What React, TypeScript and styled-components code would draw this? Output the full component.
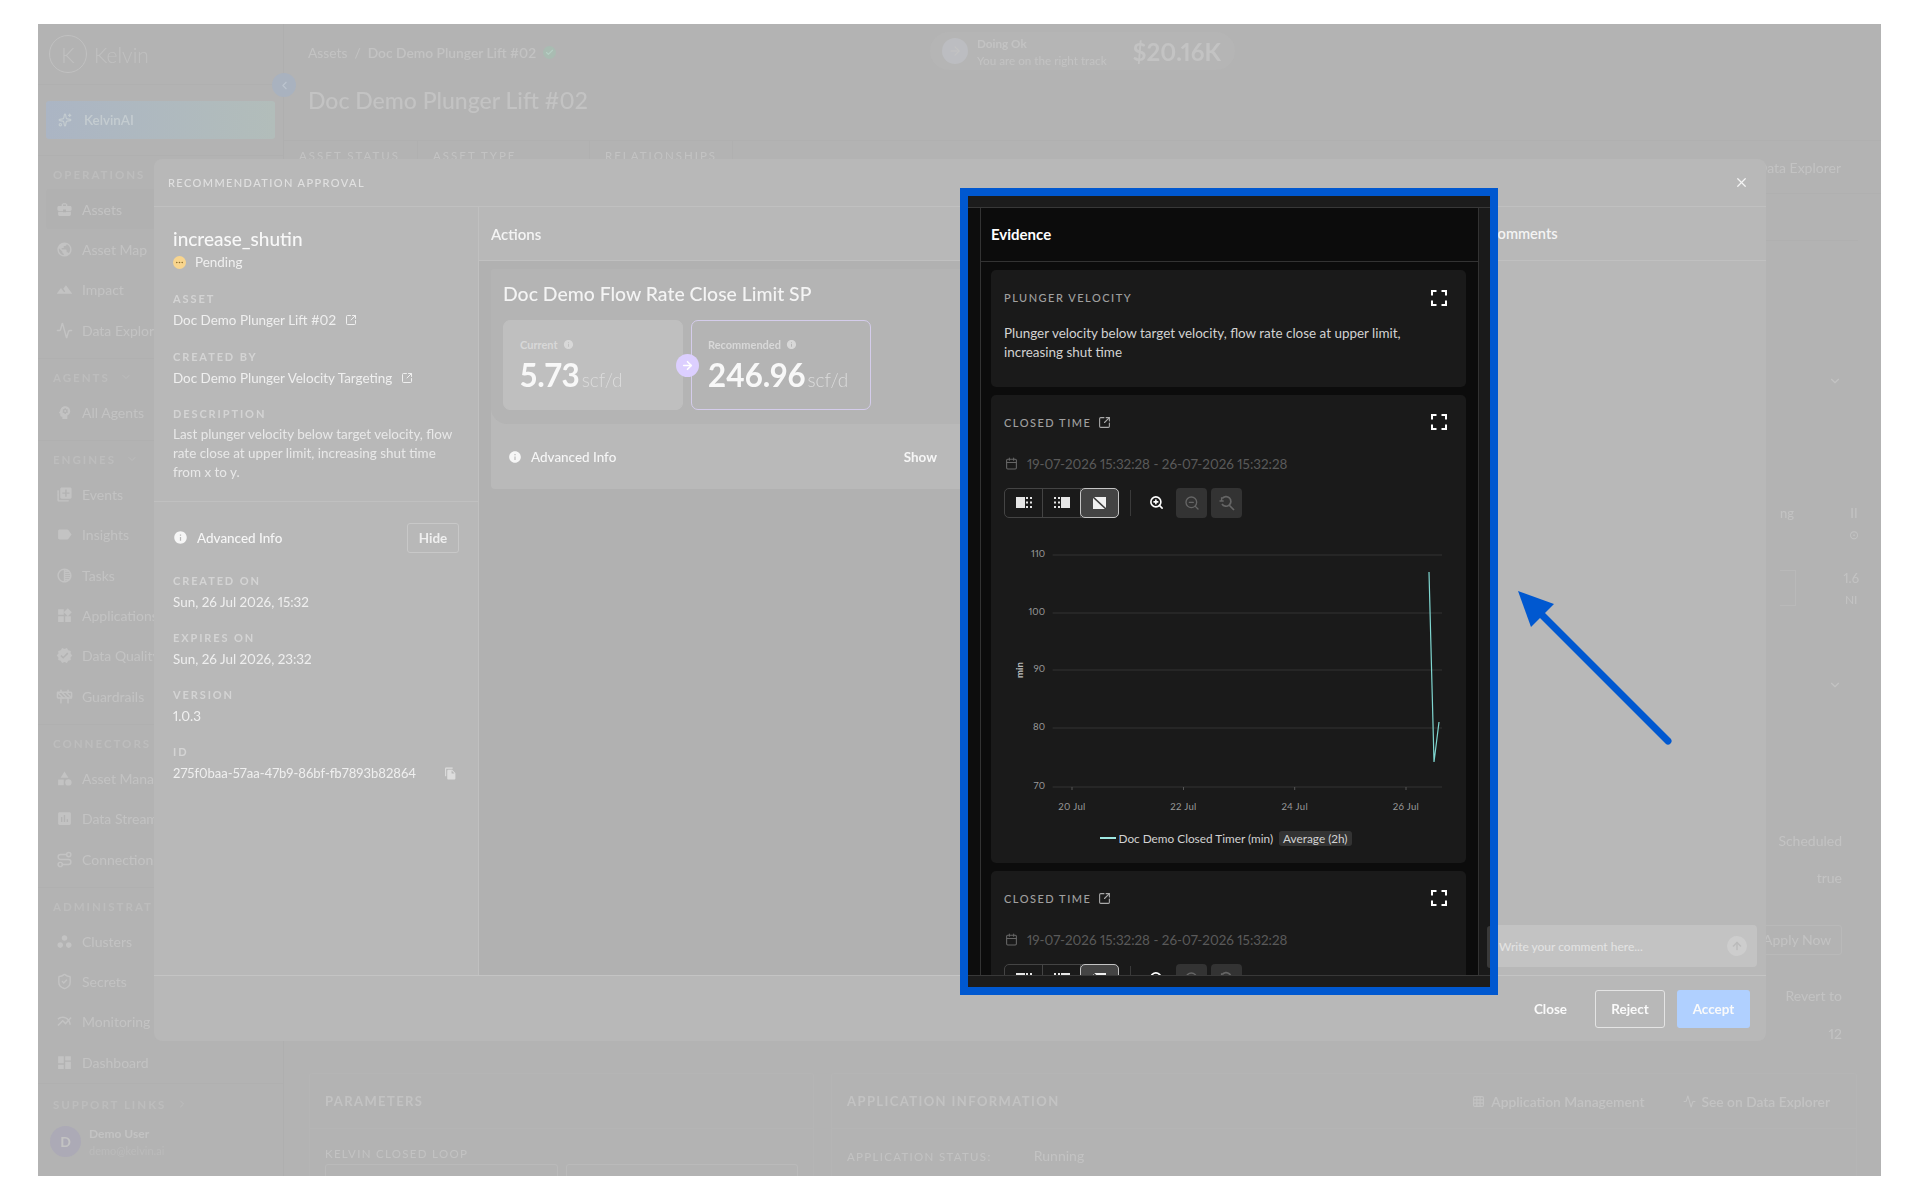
import React from 'react'
import styled, { createGlobalStyle } from 'styled-components'
import { Activity, Construction, Route, ShieldCheck, SquareArrowOutUpRight, X, ZoomIn, ZoomOut, ArrowRight, ArrowUp, ChevronDown, ChevronLeft, ChevronRight, Grid3x3, Sparkles, Check, Calendar } from 'lucide-react'
import { MdAssessment, MdCategory, MdDashboard, MdFileCopy, MdInfo, MdLabel, MdLandscape, MdLibraryAdd, MdMultilineChart, MdPsychology, MdPublic, MdVerified, MdWidgets, MdWorkspaces, MdBusinessCenter, MdTonality } from 'react-icons/md'

const GlobalStyle = createGlobalStyle`
  html, body { margin: 0; background: #fff; }
  * { box-sizing: border-box; }
  body {
    font-family: Lato, "Open Sans", sans-serif;
    font-size: 13.44px;
    font-variant-numeric: proportional-nums;
  }
`

const sections = [
  { title: 'OPERATIONS', chevron: true, items: [
    { label: 'Assets', icon: <MdBusinessCenter />, active: true },
    { label: 'Asset Map', icon: <MdPublic /> },
    { label: 'Impact', icon: <MdLandscape /> },
    { label: 'Data Explorer', icon: <Activity /> },
  ]},
  { title: 'AGENTS', chevron: true, items: [{ label: 'All Agents', icon: <MdPsychology /> }] },
  { title: 'ENGINES', chevron: true, items: [
    { label: 'Events', icon: <MdLibraryAdd /> },
    { label: 'Insights', icon: <MdLabel /> },
    { label: 'Tasks', icon: <MdTonality /> },
    { label: 'Applications', icon: <MdWidgets /> },
    { label: 'Data Quality', icon: <MdVerified /> },
    { label: 'Guardrails', icon: <Construction /> },
  ]},
  { title: 'CONNECTORS', items: [
    { label: 'Asset Management', icon: <MdCategory /> },
    { label: 'Data Streams', icon: <MdAssessment /> },
    { label: 'Connections', icon: <Route /> },
  ]},
  { title: 'ADMINISTRATION', items: [
    { label: 'Clusters', icon: <MdWorkspaces /> },
    { label: 'Secrets', icon: <ShieldCheck /> },
    { label: 'Monitoring', icon: <MdMultilineChart /> },
    { label: 'Dashboard', icon: <MdDashboard /> },
  ]},
]

const FullscreenIcon = () => (
  <svg width="16" height="16" viewBox="0 0 16 16" fill="none" stroke="#fff" strokeWidth="2">
    <path d="M1 5.5V1h4.5M10.5 1H15v4.5M15 10.5V15h-4.5M5.5 15H1v-4.5" />
  </svg>
)

const Dots = ({ x }: { x: number }) => (
  <g fill="#e6e6e6">
    {[0, 4.5, 9].map(y => <React.Fragment key={y}><rect x={x} y={y} width="2" height="2" /><rect x={x + 4} y={y} width="2" height="2" /></React.Fragment>)}
  </g>
)

const SelectAfter = () => (
  <svg width="16" height="11" viewBox="0 0 16 11"><rect x="0" y="0" width="9" height="11" fill="#e6e6e6" /><Dots x={10} /></svg>
)
const SelectBefore = () => (
  <svg width="16" height="11" viewBox="0 0 16 11"><Dots x={0} /><rect x="7" y="0" width="9" height="11" fill="#e6e6e6" /></svg>
)
const SelectNone = () => (
  <svg width="13" height="12" viewBox="0 0 13 12">
    <rect width="13" height="12" fill="#f0f0f0" />
    <path d="M0 0L13 12" stroke="#3c3c3c" strokeWidth="1.6" />
  </svg>
)

const ResetZoom = () => (
  <svg width="17" height="16" viewBox="0 0 17 16" fill="none" stroke="#666" strokeWidth="1.7">
    <path d="M4.2 3.6A4.8 4.8 0 1 1 4 9" /><path d="M1.5 6h4.2M3.6 6V2.2" strokeWidth="1.4" /><path d="M11 10l5 5" />
  </svg>
)

const PendingIcon = () => (
  <svg width="13" height="13" viewBox="0 0 13 13">
    <circle cx="6.5" cy="6.5" r="6.5" fill="#f8d58e" />
    <circle cx="3.8" cy="6.5" r=".8" fill="#8a6c2f" /><circle cx="6.5" cy="6.5" r=".8" fill="#8a6c2f" /><circle cx="9.2" cy="6.5" r=".8" fill="#8a6c2f" />
  </svg>
)

const chartTicks = [{ v: '110', y: 15 }, { v: '100', y: 73 }, { v: '90', y: 130 }, { v: '80', y: 188 }, { v: '70', y: 247 }]
const chartDates = [{ v: '20 Jul', x: 68 }, { v: '22 Jul', x: 179.5 }, { v: '24 Jul', x: 290.7 }, { v: '26 Jul', x: 402 }]

const TimeChart = () => (
  <ChartBox>
    <svg width="438" height="280" viewBox="0 0 438 280" fontFamily="Lato, sans-serif">
      {chartTicks.map(t => (
        <g key={t.v}>
          <line x1="48.6" x2="438" y1={t.y} y2={t.y} stroke="#333" />
          <text x="41" y={t.y + 2} textAnchor="end" fontSize="9.6" fill="#999">{t.v}</text>
        </g>
      ))}
      {chartDates.map(t => (
        <g key={t.v}>
          <line x1={t.x} x2={t.x} y1="247" y2="250" stroke="#555" />
          <text x={t.x} y="270" textAnchor="middle" fontSize="9.6" letterSpacing=".3" fill="#999">{t.v}</text>
        </g>
      ))}
      <text transform="translate(19 130) rotate(-90)" textAnchor="middle" fontSize="9.6" fontWeight="700" fill="#bbb">min</text>
      <polyline points="425,32 430,222 435,182" fill="none" stroke="#7fd6d0" strokeWidth="1.2" />
    </svg>
  </ChartBox>
)

const ChartCard = () => (
  <Card>
    <CardHead>
      <CardTitle>CLOSED TIME <SquareArrowOutUpRight size={13} color="#aaa" /></CardTitle>
      <FullscreenIcon />
    </CardHead>
    <DateRange><Calendar size={13} color="#666" /> 19-07-2026 15:32:28 - 26-07-2026 15:32:28</DateRange>
    <Toolbar>
      <Segments>
        <Segment><SelectAfter /></Segment>
        <Segment><SelectBefore /></Segment>
        <Segment $active><SelectNone /></Segment>
      </Segments>
      <ToolDivider />
      <ZoomButton><ZoomIn size={15} color="#fff" strokeWidth={2.6} /></ZoomButton>
      <ZoomButton $disabled><ZoomOut size={16} color="#666" /></ZoomButton>
      <ZoomButton $disabled><ResetZoom /></ZoomButton>
    </Toolbar>
    <TimeChart />
    <Legend>
      <LegendLine />
      <span>Doc Demo Closed Timer (min)</span>
      <LegendBadge>Average (2h)</LegendBadge>
    </Legend>
  </Card>
)

export default function App() {
  return (
    <>
      <GlobalStyle />
      <Frame>
        <Page>
          <Sidebar>
            <LogoBar>
              <LogoMark>K</LogoMark>
              <LogoText>Kelvin</LogoText>
            </LogoBar>
            <AiBlock>
              <AiButton><Sparkles size={14} /> KelvinAI</AiButton>
            </AiBlock>
            {sections.map((s, n) => (
              <Section key={s.title} $last={n === sections.length - 1}>
                <SectionLabel>{s.title} {s.chevron && <ChevronDown size={12} />}</SectionLabel>
                {s.items.map(i => (
                  <NavItem key={i.label} $active={i.active}>
                    <NavIcon>{i.icon}</NavIcon>
                    <span>{i.label}</span>
                  </NavItem>
                ))}
              </Section>
            ))}
            <SideFooter>
              <SectionLabel>SUPPORT LINKS <ChevronRight size={12} /></SectionLabel>
              <UserRow>
                <Avatar>D</Avatar>
                <div>
                  <UserName>Demo User</UserName>
                  <UserMail>demo@kelvin.ai</UserMail>
                </div>
              </UserRow>
            </SideFooter>
          </Sidebar>
          <CollapseDot><ChevronLeft size={13} /></CollapseDot>

          <Main>
            <TopBar>
              <TitleBlock>
                <Breadcrumb>
                  <span>Assets</span> <span>/</span> <strong>Doc Demo Plunger Lift #02</strong>
                  <StatusDot><Check size={9} strokeWidth={3} /></StatusDot>
                </Breadcrumb>
                <PageTitle>Doc Demo Plunger Lift #02</PageTitle>
              </TitleBlock>
              <ScorePill>
                <ScoreCircle><ArrowRight size={14} /></ScoreCircle>
                <ScoreText>
                  <b>Doing Ok</b>
                  <span>You are on the right track</span>
                </ScoreText>
                <ScoreValue>$20.16K</ScoreValue>
              </ScorePill>
            </TopBar>
            <InfoRow>
              <InfoCell $w={134}>ASSET STATUS</InfoCell>
              <InfoCell $w={172}>ASSET TYPE</InfoCell>
              <InfoCell $w={143}>RELATIONSHIPS</InfoCell>
              <InfoLink>See on Data Explorer</InfoLink>
            </InfoRow>
            <Body>
              <RightPanel>
                <PanelRule />
                <PanelChevron><ChevronDown size={14} /></PanelChevron>
                <PanelStat $top={114}>ng<StatStack><span>II</span><small>⊙</small></StatStack></PanelStat>
                <PanelStat $top={28}><i /><StatStack><span>1.6</span><small>NI</small></StatStack></PanelStat>
                <PanelChevron $top={71}><ChevronDown size={14} /></PanelChevron>
                <PanelText $top={137}>Scheduled</PanelText>
                <PanelText $top={20}>true</PanelText>
                <ApplyNow>Apply Now</ApplyNow>
                <PanelText $top={32}>Revert to</PanelText>
                <PanelText $top={21}>12</PanelText>
              </RightPanel>
            </Body>
            <BottomRow>
              <BottomCard $w={505}>
                <BottomHead>PARAMETERS</BottomHead>
                <BottomBody>
                  <BottomLabel>KELVIN CLOSED LOOP</BottomLabel>
                  <InputRow><FakeInput /><FakeInput /></InputRow>
                </BottomBody>
              </BottomCard>
              <BottomCard $grow>
                <BottomHead>
                  APPLICATION INFORMATION
                  <BottomLinks>
                    <span><Grid3x3 size={13} /> Application Management</span>
                    <span><Activity size={13} /> See on Data Explorer</span>
                  </BottomLinks>
                </BottomHead>
                <BottomBody>
                  <BottomLabel>APPLICATION STATUS: <em>Running</em></BottomLabel>
                </BottomBody>
              </BottomCard>
            </BottomRow>
          </Main>

          <Modal>
            <ModalHead>
              <ModalTitle>RECOMMENDATION APPROVAL</ModalTitle>
              <X size={15} color="#f4f4f4" />
            </ModalHead>
            <ModalColumns>
              <InfoColumn>
                <InfoTop>
                  <RecName>increase_shutin</RecName>
                  <RecStatus><PendingIcon /> Pending</RecStatus>
                  <Field><FieldLabel>ASSET</FieldLabel><FieldValue>Doc Demo Plunger Lift #02 <SquareArrowOutUpRight size={12} /></FieldValue></Field>
                  <Field><FieldLabel>CREATED BY</FieldLabel><FieldValue>Doc Demo Plunger Velocity Targeting <SquareArrowOutUpRight size={12} /></FieldValue></Field>
                  <Field>
                    <FieldLabel>DESCRIPTION</FieldLabel>
                    <Description>Last plunger velocity below target velocity, flow rate close at upper limit, increasing shut time from x to y.</Description>
                  </Field>
                </InfoTop>
                <InfoBottom>
                  <AdvancedRow>
                    <AdvancedLabel><MdInfo size={15} /> Advanced Info</AdvancedLabel>
                    <HideButton>Hide</HideButton>
                  </AdvancedRow>
                  <Field><FieldLabel>CREATED ON</FieldLabel><FieldValue>Sun, 26 Jul 2026, 15:32</FieldValue></Field>
                  <Field><FieldLabel>EXPIRES ON</FieldLabel><FieldValue>Sun, 26 Jul 2026, 23:32</FieldValue></Field>
                  <Field><FieldLabel>VERSION</FieldLabel><FieldValue>1.0.3</FieldValue></Field>
                  <Field>
                    <FieldLabel>ID</FieldLabel>
                    <IdRow>275f0baa-57aa-47b9-86bf-fb7893b82864 <MdFileCopy size={13} /></IdRow>
                  </Field>
                </InfoBottom>
              </InfoColumn>

              <ActionsColumn>
                <ColumnHead>Actions</ColumnHead>
                <ActionCard>
                  <ActionPanel>
                    <ActionTitle>Doc Demo Flow Rate Close Limit SP</ActionTitle>
                    <Tiles>
                      <Tile>
                        <TileLabel>Current <MdInfo size={11} /></TileLabel>
                        <TileValue>5.73<small>scf/d</small></TileValue>
                      </Tile>
                      <Tile $outlined>
                        <TileLabel>Recommended <MdInfo size={11} /></TileLabel>
                        <TileValue>246.96<small>scf/d</small></TileValue>
                      </Tile>
                      <TileArrow><ArrowRight size={13} strokeWidth={3} /></TileArrow>
                    </Tiles>
                  </ActionPanel>
                  <ActionFoot>
                    <AdvancedLabel><MdInfo size={14} /> Advanced Info</AdvancedLabel>
                    <ShowLink>Show</ShowLink>
                  </ActionFoot>
                </ActionCard>
              </ActionsColumn>

              <EvidenceSlot />

              <CommentsColumn>
                <CommentsHead>Comments</CommentsHead>
                <CommentBox>
                  <span>Write your comment here...</span>
                  <SendButton><ArrowUp size={12} strokeWidth={3} /></SendButton>
                </CommentBox>
              </CommentsColumn>
            </ModalColumns>
            <ModalFoot>
              <CloseLink>Close</CloseLink>
              <RejectButton>Reject</RejectButton>
              <AcceptButton>Accept</AcceptButton>
            </ModalFoot>
          </Modal>

          <Spotlight>
            <SpotStrip />
            <SpotColumns>
              <SpotGutter />
              <EvidenceColumn>
                <EvidenceHead>Evidence</EvidenceHead>
                <EvidenceBody>
                  <Card>
                    <CardHead>
                      <CardTitle>PLUNGER VELOCITY</CardTitle>
                      <FullscreenIcon />
                    </CardHead>
                    <CardText>Plunger velocity below target velocity, flow rate close at upper limit, increasing shut time</CardText>
                  </Card>
                  <ChartCard />
                  <ChartCard />
                </EvidenceBody>
              </EvidenceColumn>
              <SpotGutter $right>
                <CommentEdge />
              </SpotGutter>
            </SpotColumns>
            <SpotStrip $bottom />
          </Spotlight>
          <PointerArrow width="170" height="170" viewBox="0 0 170 170">
            <path d="M156 156L26 26" stroke="#0058d0" strokeWidth="7" strokeLinecap="round" fill="none" />
            <path d="M6 6L42 19 19 42z" fill="#0058d0" />
          </PointerArrow>
        </Page>
      </Frame>
    </>
  )
}

const Frame = styled.div`
  width: 1920px;
  height: 1200px;
  padding: 24px 39px 24px 38px;
`

const Page = styled.div`
  position: relative;
  display: flex;
  width: 1843px;
  height: 1152px;
  overflow: hidden;
  background: #b3b3b3;
`

const Sidebar = styled.aside`
  flex: none;
  width: 246px;
  display: flex;
  flex-direction: column;
  border-right: 1px solid #afafaf;
  color: #c3c3c3;
  filter: blur(.6px);
`

const CollapseDot = styled.div`
  position: absolute;
  left: 234px;
  top: 49px;
  width: 24px;
  height: 24px;
  border-radius: 50%;
  display: flex;
  align-items: center;
  justify-content: center;
  background: #a9b2bf;
  color: #bcc4cf;
`

const LogoBar = styled.div`
  flex: none;
  height: 61px;
  display: flex;
  align-items: center;
  gap: 7px;
  padding-left: 11px;
  border-bottom: 1px solid #b0b0b0;
`

const LogoMark = styled.div`
  width: 38px;
  height: 38px;
  border: 1px solid #c0c0c0;
  border-radius: 50%;
  display: flex;
  align-items: center;
  justify-content: center;
  font-size: 21px;
  font-weight: 300;
  color: #c0c0c0;
`

const LogoText = styled.div`
  font-size: 21px;
  font-weight: 300;
  color: #c0c0c0;
`

const AiBlock = styled.div`
  flex: none;
  height: 71px;
  padding: 16px 8px;
  border-bottom: 1px solid #b0b0b0;
`

const AiButton = styled.div`
  height: 38px;
  display: flex;
  align-items: center;
  gap: 12px;
  padding-left: 12px;
  border-radius: 3px;
  font-weight: 600;
  background: linear-gradient(90deg, #abb5c4, #b2bdba);
  color: #c4ccd0;
`

const Section = styled.div<{ $last?: boolean }>`
  flex: none;
  padding: ${p => (p.$last ? '8px 0 0' : '8px 0')};
  border-bottom: ${p => (p.$last ? '0' : '1px solid #b0b0b0')};
`

const SectionLabel = styled.div`
  height: 20px;
  margin-bottom: 5px;
  padding-left: 15px;
  display: flex;
  align-items: center;
  gap: 10px;
  font-size: 11.5px;
  font-weight: 700;
  letter-spacing: 2px;
  color: #bdbdbd;
  white-space: nowrap;
`

const NavItem = styled.div<{ $active?: boolean }>`
  height: 40.3px;
  margin: 0 8px;
  padding-left: 10px;
  display: flex;
  align-items: center;
  gap: 9px;
  border-radius: 3px;
  font-size: 14px;
  white-space: nowrap;
  background: ${p => (p.$active ? '#b1b1b1' : 'transparent')};
`

const NavIcon = styled.span`
  display: flex;
  svg { width: 17px; height: 17px; }
`

const SideFooter = styled.div`
  flex: none;
  margin-top: auto;
  height: 93px;
  padding-top: 10px;
  border-top: 1px solid #b0b0b0;
`

const UserRow = styled.div`
  display: flex;
  align-items: center;
  gap: 8px;
  margin-top: 12px;
  padding-left: 12px;
`

const Avatar = styled.div`
  width: 31px;
  height: 31px;
  border-radius: 50%;
  background: #acaab6;
  display: flex;
  align-items: center;
  justify-content: center;
  font-weight: 700;
  font-size: 14px;
`

const UserName = styled.div`
  font-size: 12px;
  font-weight: 700;
`

const UserMail = styled.div`
  margin-top: 3px;
  font-size: 11px;
  color: #bbb;
`

const Main = styled.main`
  flex: 1;
  min-width: 0;
  display: flex;
  flex-direction: column;
  color: #c3c3c3;
  filter: blur(.6px);
`

const TopBar = styled.div`
  flex: none;
  height: 116px;
  display: flex;
  align-items: flex-start;
  padding-left: 24px;
`

const TitleBlock = styled.div`
  width: 622px;
  padding-top: 17px;
`

const Breadcrumb = styled.div`
  display: flex;
  align-items: center;
  gap: 7px;
  font-size: 13.8px;
  height: 22px;
  strong { font-weight: 600; }
`

const StatusDot = styled.span`
  width: 13px;
  height: 13px;
  border-radius: 50%;
  display: flex;
  align-items: center;
  justify-content: center;
  background: #a9bcb2;
  color: #b6cfc4;
`

const PageTitle = styled.h1`
  margin: 23px 0 0;
  font-size: 23px;
  font-weight: 500;
`

const ScorePill = styled.div`
  margin-top: 8px;
  width: 305px;
  height: 38px;
  padding: 0 14px 0 12px;
  display: flex;
  align-items: center;
  gap: 9px;
  border-radius: 19px;
  background: #b5b5b5;
`

const ScoreCircle = styled.div`
  width: 26px;
  height: 26px;
  border-radius: 50%;
  background: #bcbdc1;
  display: flex;
  align-items: center;
  justify-content: center;
`

const ScoreText = styled.div`
  display: flex;
  flex-direction: column;
  gap: 3px;
  font-size: 11.7px;
  white-space: nowrap;
  b { font-weight: 700; }
`

const ScoreValue = styled.div`
  margin-left: auto;
  font-size: 24px;
  font-weight: 700;
`

const InfoRow = styled.div`
  flex: none;
  height: 54px;
  display: flex;
  border-top: 1px solid #b0b0b0;
  border-bottom: 1px solid #b0b0b0;
`

const InfoCell = styled.div<{ $w: number }>`
  width: ${p => p.$w}px;
  padding: 8px 15px;
  border-right: 1px solid #b0b0b0;
  font-size: 11.5px;
  letter-spacing: 2px;
`

const InfoLink = styled.div`
  margin-left: auto;
  padding: 18px 40px 0 0;
  font-size: 14px;
`

const Body = styled.div`
  flex: 1;
  min-height: 0;
  display: flex;
  justify-content: flex-end;
`

const RightPanel = styled.div`
  width: 200px;
  padding-right: 39px;
  display: flex;
  flex-direction: column;
  align-items: flex-end;
`

const PanelRule = styled.div`
  width: 176px;
  margin-right: -16px;
  margin-top: 46px;
  border-top: 1px solid #b0b0b0;
`

const PanelChevron = styled.div<{ $top?: number }>`
  margin-top: ${p => p.$top ?? 133}px;
`

const PanelStat = styled.div<{ $top: number }>`
  width: 79px;
  margin-top: ${p => p.$top}px;
  margin-right: -17px;
  display: flex;
  align-items: flex-start;
  justify-content: space-between;
  font-size: 13px;
  i { width: 16px; height: 36px; border: 1px solid #b9b9b9; border-left: 0; }
`

const StatStack = styled.div`
  display: flex;
  flex-direction: column;
  align-items: center;
  gap: 6px;
  small { font-size: 12px; }
`

const PanelText = styled.div<{ $top: number }>`
  margin-top: ${p => p.$top}px;
  font-size: 14px;
`

const ApplyNow = styled.div`
  margin-top: 39px;
  width: 92px;
  height: 30px;
  padding-left: 12px;
  line-height: 28px;
  font-size: 14px;
  border: 1px solid #b9b9b9;
  border-radius: 3px;
`

const BottomRow = styled.div`
  flex: none;
  height: 103px;
  padding: 0 24px 0 25px;
  display: flex;
  gap: 17px;
`

const BottomCard = styled.section<{ $w?: number; $grow?: boolean }>`
  ${p => p.$w && `width: ${p.$w}px;`}
  ${p => p.$grow && 'flex: 1;'}
  border: 1px solid #b5b5b5;
  border-bottom: 0;
  border-radius: 3px 3px 0 0;
`

const BottomHead = styled.div`
  height: 55px;
  padding: 0 15px;
  display: flex;
  align-items: center;
  justify-content: space-between;
  border-bottom: 1px solid #b5b5b5;
  font-size: 13px;
  font-weight: 700;
  letter-spacing: 1.4px;
`

const BottomLinks = styled.div`
  display: flex;
  gap: 38px;
  padding-right: 11px;
  font-size: 13.8px;
  font-weight: 600;
  letter-spacing: 0;
  span { display: flex; align-items: center; gap: 6px; }
`

const BottomBody = styled.div`
  padding: 18px 15px 0;
`

const BottomLabel = styled.div`
  font-size: 11.5px;
  letter-spacing: 1.3px;
  em { margin-left: 38px; font-style: normal; font-size: 14px; letter-spacing: 0; }
`

const InputRow = styled.div`
  display: flex;
  gap: 8px;
  margin-top: 4px;
`

const FakeInput = styled.div`
  flex: 1;
  height: 30px;
  border: 1px solid #bababa;
  border-radius: 3px;
`

const Modal = styled.div`
  position: absolute;
  left: 116px;
  top: 135px;
  width: 1612px;
  height: 882px;
  display: flex;
  flex-direction: column;
  border-radius: 8px;
  overflow: hidden;
  background: #b8b8b8;
  filter: blur(.35px);
`

const ModalHead = styled.div`
  height: 48px;
  flex: none;
  display: flex;
  align-items: center;
  justify-content: space-between;
  padding: 0 17px 0 14px;
  border-bottom: 1px solid #c0c0c0;
`

const ModalTitle = styled.div`
  font-size: 11px;
  font-weight: 500;
  letter-spacing: 1.4px;
  color: #e0e0e0;
`

const ModalColumns = styled.div`
  flex: 1;
  min-height: 0;
  display: grid;
  grid-template-columns: 325px 500px 499px 1fr;
  border-bottom: 1px solid #c4c4c4;
`

const InfoColumn = styled.div`
  border-right: 1px solid #c0c0c0;
  color: #efefef;
`

const InfoTop = styled.div`
  padding: 20px 19px 18px;
  border-bottom: 1px solid #c0c0c0;
`

const InfoBottom = styled.div`
  padding: 21px 19px 0;
`

const RecName = styled.div`
  font-size: 19px;
  line-height: 24px;
  font-weight: 500;
  color: #f8f8f8;
`

const RecStatus = styled.div`
  display: flex;
  align-items: center;
  gap: 9px;
  height: 20px;
  margin-top: 1px;
  margin-bottom: 17.3px;
`

const Field = styled.div`
  margin-top: 16.3px;
`

const FieldLabel = styled.div`
  height: 20px;
  line-height: 20px;
  margin-bottom: 1px;
  font-size: 11px;
  font-weight: 700;
  letter-spacing: 1.9px;
  color: #d4d4d4;
`

const FieldValue = styled.div`
  height: 20px;
  line-height: 20px;
  display: flex;
  align-items: center;
  gap: 9px;
  white-space: nowrap;
`

const Description = styled.div`
  line-height: 19.2px;
  color: #e8e8e8;
`

const IdRow = styled(FieldValue)`
  justify-content: space-between;
  font-size: 13.05px;
  svg { color: #ddd; margin-right: 2px; }
`

const AdvancedRow = styled.div`
  display: flex;
  align-items: center;
  justify-content: space-between;
  height: 30px;
  margin-bottom: 18px;
`

const AdvancedLabel = styled.div`
  display: flex;
  align-items: center;
  gap: 9px;
  font-weight: 500;
  color: #f6f6f6;
`

const HideButton = styled.div`
  width: 52px;
  height: 30px;
  line-height: 28px;
  text-align: center;
  border: 1px solid #c8c8c8;
  border-radius: 3px;
  font-weight: 700;
`

const ActionsColumn = styled.div`
  background: #b1b1b1;
  border-right: 1px solid #c0c0c0;
  overflow: hidden;
`

const ColumnHead = styled.div`
  height: 54px;
  display: flex;
  align-items: center;
  padding-left: 12px;
  border-bottom: 1px solid #c0c0c0;
  background: #b8b8b8;
  font-weight: 600;
  color: #f4f4f4;
  font-size: 15px;
`

const CommentsHead = styled(ColumnHead)`
  padding-left: 10px;
  font-size: 14.6px;
`

const ActionCard = styled.div`
  margin: 8px 0 0 12px;
  width: 500px;
  height: 220px;
  border-radius: 4px;
  background: #b9b9b9;
`

const ActionPanel = styled.div`
  height: 155px;
  padding: 13px 12px 0;
  border-radius: 4px 0 16px 16px;
  background: #b4b4b4;
`

const ActionTitle = styled.div`
  font-size: 19.4px;
  line-height: 24px;
  font-weight: 500;
  color: #f4f4f4;
`

const Tiles = styled.div`
  position: relative;
  display: flex;
  gap: 8px;
  margin-top: 14px;
`

const Tile = styled.div<{ $outlined?: boolean }>`
  width: 180px;
  height: 90px;
  padding: 17px 16px;
  border-radius: 7px;
  background: ${p => (p.$outlined ? 'transparent' : '#bfbfbf')};
  border: 1px solid ${p => (p.$outlined ? '#d4cceb' : '#bfbfbf')};
`

const TileLabel = styled.div`
  display: flex;
  align-items: center;
  gap: 5px;
  font-size: 11px;
  font-weight: 700;
  color: #d8d8d8;
`

const TileValue = styled.div`
  margin-top: 4px;
  font-size: 31.5px;
  line-height: 40px;
  font-weight: 700;
  color: #f8f8f8;
  small { margin-left: 2px; font-size: 19px; font-weight: 300; color: #dcdcdc; }
`

const TileArrow = styled.div`
  position: absolute;
  left: 173px;
  top: 34px;
  width: 23px;
  height: 23px;
  border-radius: 50%;
  background: #dccfff;
  color: #fff;
  display: flex;
  align-items: center;
  justify-content: center;
`

const ActionFoot = styled.div`
  height: 65px;
  display: flex;
  align-items: center;
  justify-content: space-between;
  padding: 0 54px 0 17px;
`

const ShowLink = styled.div`
  font-weight: 700;
  color: #f6f6f6;
`

const EvidenceSlot = styled.div``

const CommentsColumn = styled.div`
  position: relative;
`

const CommentBox = styled.div`
  position: absolute;
  left: 9px;
  right: 9px;
  top: 718px;
  height: 42px;
  padding: 0 10px 0 12px;
  display: flex;
  align-items: center;
  justify-content: space-between;
  border-radius: 4px;
  background: #c3c3c3;
  color: #e4e4e4;
  font-size: 12px;
`

const SendButton = styled.div`
  width: 20px;
  height: 20px;
  border-radius: 50%;
  background: #cdcdcd;
  color: #bbb;
  display: flex;
  align-items: center;
  justify-content: center;
`

const ModalFoot = styled.div`
  flex: none;
  height: 65px;
  display: flex;
  align-items: center;
  justify-content: flex-end;
  gap: 12px;
  padding-right: 16px;
  font-weight: 700;
  color: #fafafa;
`

const CloseLink = styled.div`
  margin-right: 16px;
`

const RejectButton = styled.div`
  width: 70px;
  height: 38px;
  line-height: 36px;
  text-align: center;
  border: 1px solid #e4e4e4;
  border-radius: 3px;
`

const AcceptButton = styled.div`
  width: 73px;
  height: 38px;
  line-height: 38px;
  text-align: center;
  border-radius: 3px;
  background: #b0d0ff;
`

const Spotlight = styled.div`
  position: absolute;
  left: 922px;
  top: 164px;
  width: 538px;
  height: 807px;
  display: flex;
  flex-direction: column;
  border: 8px solid #0058d0;
  background: #1a1a1a;
  color: #d8d8d8;
`

const SpotStrip = styled.div<{ $bottom?: boolean }>`
  flex: none;
  height: 12px;
  background: #1c1c1c;
  border-${p => (p.$bottom ? 'top' : 'bottom')}: 1px solid #383838;
`

const SpotColumns = styled.div`
  flex: 1;
  min-height: 0;
  display: grid;
  grid-template-columns: 13px 1fr 12px;
`

const SpotGutter = styled.div<{ $right?: boolean }>`
  position: relative;
  background: ${p => (p.$right ? '#1a1a1a' : '#0d0d0d')};
  border-${p => (p.$right ? 'left' : 'right')}: 1px solid #333;
`

const CommentEdge = styled.div`
  position: absolute;
  right: 0;
  bottom: 7px;
  width: 3px;
  height: 42px;
  border-radius: 3px 0 0 3px;
  background: #3a3a3a;
`

const EvidenceColumn = styled.div`
  display: flex;
  flex-direction: column;
  min-height: 0;
  background: #0c0c0c;
`

const EvidenceHead = styled.div`
  flex: none;
  height: 54px;
  padding: 0 0 2px 10px;
  display: flex;
  align-items: center;
  border-bottom: 1px solid #333;
  font-size: 15px;
  font-weight: 700;
  color: #fff;
`

const EvidenceBody = styled.div`
  flex: 1;
  min-height: 0;
  overflow: hidden;
  padding: 8px 12px 0 10px;
  display: flex;
  flex-direction: column;
  gap: 8px;
`

const Card = styled.section`
  flex: none;
  padding: 18px 19px 17px 13px;
  border-radius: 5px;
  background: #1a1a1a;
`

const CardHead = styled.div`
  height: 19px;
  display: flex;
  align-items: center;
  justify-content: space-between;
`

const CardTitle = styled.div`
  display: flex;
  align-items: center;
  gap: 7px;
  font-size: 11px;
  font-weight: 500;
  letter-spacing: 1.5px;
  color: #a0a0a0;
`

const CardText = styled.p`
  margin: 17px 0 7px;
  line-height: 19.4px;
  color: #d2d2d2;
`

const DateRange = styled.div`
  height: 20px;
  margin-top: 22px;
  padding-left: 1px;
  display: flex;
  align-items: center;
  gap: 9px;
  font-size: 13.4px;
  color: #5a5a5a;
`

const Toolbar = styled.div`
  margin-top: 14px;
  height: 30px;
  display: flex;
  align-items: center;
  gap: 4px;
`

const Segments = styled.div`
  display: flex;
  width: 115px;
  height: 30px;
  margin-right: 7px;
  border: 1px solid #444;
  border-radius: 5px;
`

const Segment = styled.div<{ $active?: boolean }>`
  flex: 1;
  display: flex;
  align-items: center;
  justify-content: center;
  background: ${p => (p.$active ? '#444' : 'transparent')};
  border-right: 1px solid ${p => (p.$active ? 'transparent' : '#444')};
  ${p => p.$active && 'margin: -1px; border: 1px solid #c4c4c4; border-radius: 5px;'}
`

const ToolDivider = styled.div`
  width: 1px;
  height: 26px;
  margin-right: 6px;
  background: #3a3a3a;
`

const ZoomButton = styled.div<{ $disabled?: boolean }>`
  width: 31px;
  height: 30px;
  display: flex;
  align-items: center;
  justify-content: center;
  border-radius: 4px;
  background: ${p => (p.$disabled ? '#333' : 'transparent')};
`

const ChartBox = styled.div`
  margin-top: 22px;
  height: 280px;
`

const Legend = styled.div`
  margin-top: 11px;
  height: 15px;
  display: flex;
  align-items: center;
  justify-content: center;
  font-size: 11.8px;
  color: #d2d2d2;
`

const LegendLine = styled.span`
  width: 16px;
  height: 2px;
  margin-right: 3px;
  background: #9fe8e2;
`

const LegendBadge = styled.span`
  margin-left: 6px;
  padding: 0 4px;
  line-height: 15px;
  border-radius: 3px;
  background: #333;
`

const PointerArrow = styled.svg`
  position: absolute;
  left: 1474px;
  top: 561px;
`
